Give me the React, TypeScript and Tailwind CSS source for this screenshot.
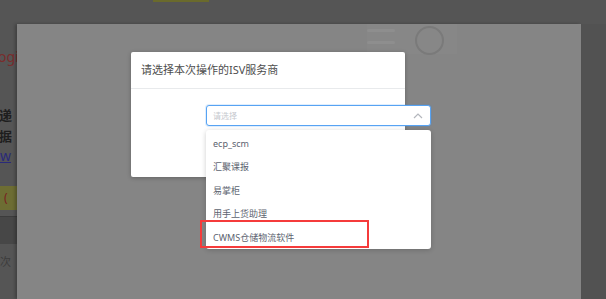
import React from "react";

const font = { fontFamily: '"Noto Sans", "Noto Sans CJK SC", sans-serif' };

export default function App() {
  const items = ["ecp_scm", "汇聚课报", "易掌柜", "用手上货助理", "CWMS仓储物流软件"];
  return (
    <div className="relative w-[606px] h-[299px] overflow-hidden bg-[#555555]" style={font}>
      {/* dimmed underlying page */}
      <div className="absolute left-[153px] top-0 w-[56px] h-[2px] bg-[#6a6a2c]" />
      <div className="absolute left-0 top-[24px] w-[17px] h-[275px] flex flex-col overflow-hidden">
        <div className="h-[24px]" />
        <div className="text-[14px] leading-[18px] text-[#7a2c2c] -ml-[2px] whitespace-nowrap">ogi</div>
        <div className="h-[38px]" />
        <div className="text-[13px] leading-[22px] font-bold text-[#1e1e1e] -ml-[1px] whitespace-nowrap">递</div>
        <div className="text-[13px] leading-[20px] font-bold text-[#1e1e1e] -ml-[1px] whitespace-nowrap">据</div>
        <div className="text-[14px] leading-[20px] text-[#2a2a7a] underline whitespace-nowrap">w</div>
        <div className="h-[20px]" />
        <div className="h-[24px] bg-[#6d6d33] text-[12px] leading-[24px] text-[#7a2020] pl-[4px] whitespace-nowrap">(</div>
        <div className="h-[6px]" />
        <div className="h-[1px] bg-[#3c3c3c]" />
        <div className="h-[27px] bg-[#474747]" />
        <div className="h-[10px]" />
        <div className="text-[11px] leading-[16px] text-[#3c3c3c] whitespace-nowrap">次</div>
      </div>
      <div className="absolute left-[581px] top-[24px] w-[25px] h-[275px] bg-[#525252]" />

      {/* drawer panel */}
      <div className="absolute left-[17px] top-[24px] w-[564px] h-[275px] bg-[#858585] shadow-[-2px_0_3px_rgba(0,0,0,0.25)]">
        <div className="absolute left-[350px] top-0 w-[90px] h-[30px] bg-[#878787]" />
        <div className="absolute left-[350px] top-[5px] w-[28px] h-[3px] bg-[#8e8e8e] rounded" />
        <div className="absolute left-[350px] top-[17px] w-[28px] h-[3px] bg-[#8e8e8e] rounded" />
        <div className="absolute left-[398px] top-[2px] w-[29px] h-[29px] rounded-full border-2 border-[#7a7a7a]" />
      </div>

      {/* modal */}
      <div className="absolute left-[131px] top-[52px] w-[274px] h-[125px] bg-white rounded-[2px] shadow-[0_1px_4px_rgba(0,0,0,0.25)]">
        <div className="h-[37px] border-b border-[#e8eaec] px-[10px] flex items-center">
          <span className="text-[11px] text-[#4d4d4d]">请选择本次操作的ISV服务商</span>
        </div>
      </div>

      {/* select */}
      <div className="absolute left-[206px] top-[105px] w-[225px] h-[21px] bg-white border border-[#57a3f3] rounded-[3px] shadow-[0_0_0_1px_rgba(45,140,240,0.15)] flex items-center px-[6px]">
        <span className="text-[8px] text-[#c5c8ce] flex-1">请选择</span>
        <svg width="10" height="7" viewBox="0 0 10 7" className="mr-[1px]">
          <path d="M1 6 L5 2 L9 6" fill="none" stroke="#b4b7bd" strokeWidth="1.2" />
        </svg>
      </div>

      {/* dropdown */}
      <div className="absolute left-[206px] top-[130px] w-[225px] h-[119px] bg-white rounded-[3px] shadow-[0_1px_5px_rgba(0,0,0,0.2)] flex flex-col pt-[2px]">
        {items.map((t) => (
          <div key={t} className="h-[23.5px] flex items-center px-[7px] text-[9px] text-[#5c6370] whitespace-nowrap">
            {t}
          </div>
        ))}
      </div>

      {/* red highlight */}
      <div className="absolute left-[200px] top-[220px] w-[169px] h-[28px] border-2 border-[#f53b3b]" />
    </div>
  );
}
